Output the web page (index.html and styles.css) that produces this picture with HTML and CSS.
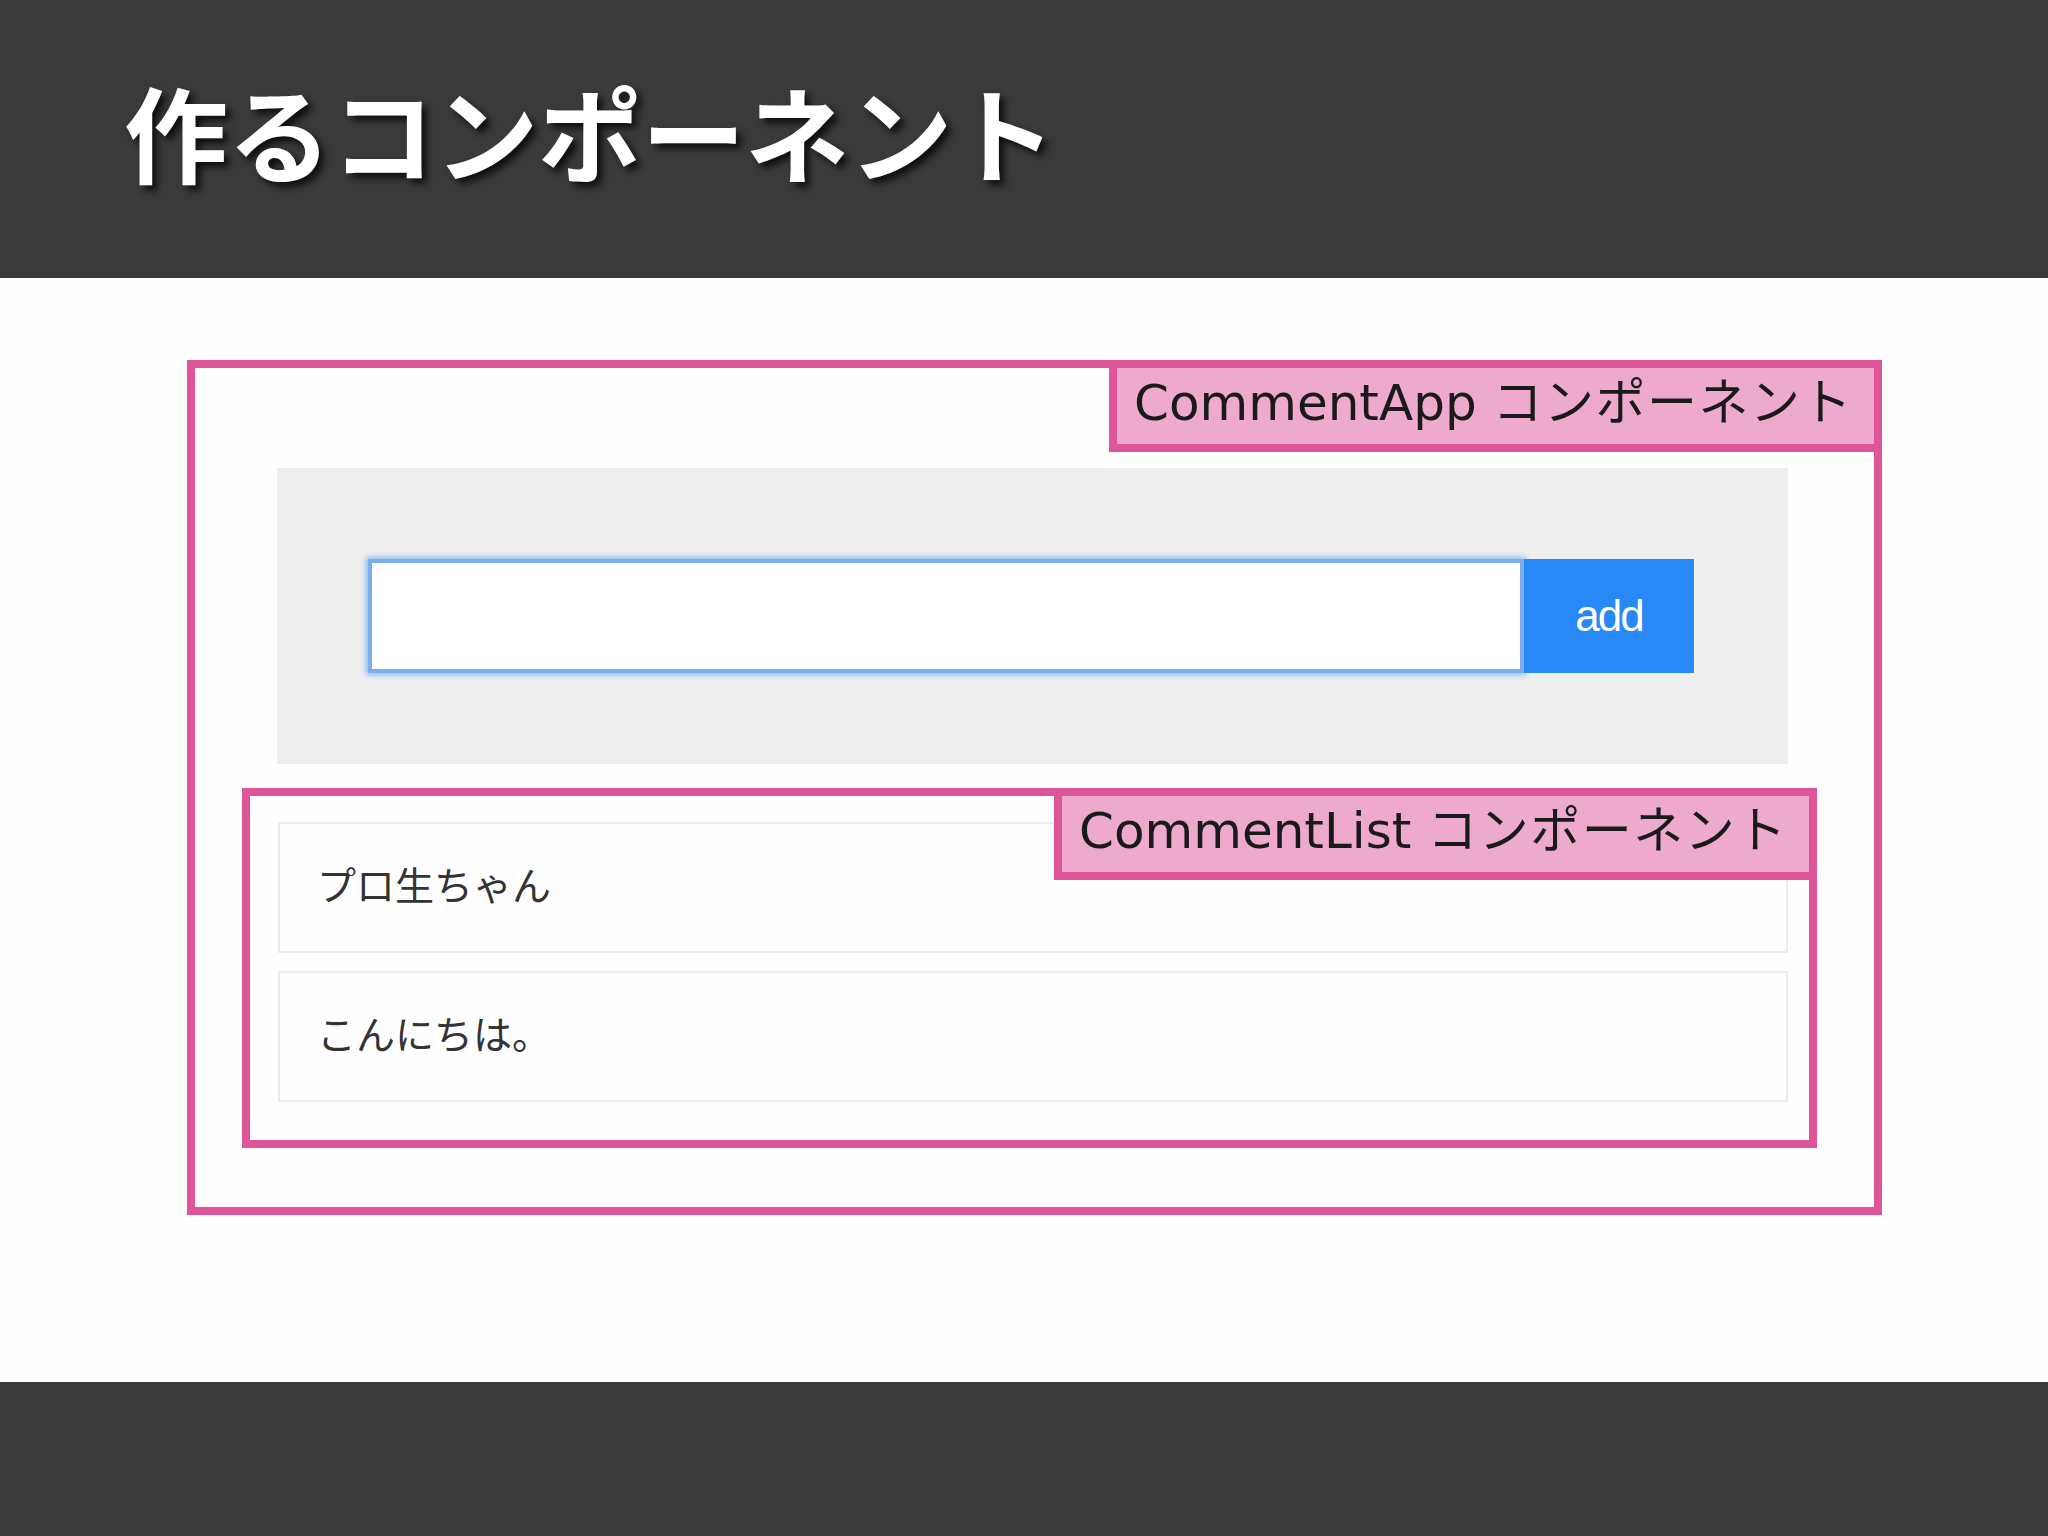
FILE: index.html
```html
<!DOCTYPE html>
<html lang="ja">
<head>
<meta charset="utf-8">
<title>作るコンポーネント</title>
<link rel="stylesheet" href="styles.css">
</head>
<body>
<header class="slide-header">
  <h1 class="slide-title">作るコンポーネント</h1>
</header>
<main class="slide-body">
  <section class="comp-app">
    <div class="comp-label">CommentApp <span class="label-ja">コンポーネント</span></div>
    <div class="form-area">
      <div class="text-input"></div>
      <div class="add-btn">add</div>
    </div>
    <section class="comp-list">
      <div class="comp-label">CommentList <span class="label-ja">コンポーネント</span></div>
      <div class="comment-item">プロ生ちゃん</div>
      <div class="comment-item">こんにちは。</div>
    </section>
  </section>
</main>
<footer class="slide-footer"></footer>
</body>
</html>
```
FILE: styles.css
```css
html, body {
  margin: 0;
  padding: 0;
}
body {
  width: 2048px;
  height: 1536px;
  background: #fefefe;
  font-family: "Noto Sans CJK JP", sans-serif;
  display: flex;
  flex-direction: column;
}
.slide-header {
  height: 278px;
  background: #3a3a3a;
  display: flex;
  align-items: center;
  padding-left: 124px;
  box-sizing: border-box;
}
.slide-title {
  margin: 0;
  color: #ffffff;
  font-family: "Noto Sans CJK JP", sans-serif;
  font-weight: 700;
  font-size: 104px;
  letter-spacing: -0.5px;
  line-height: 1;
  margin-top: -16px;
  text-shadow: 5px 5px 7px rgba(0, 0, 0, 0.75);
}
.slide-body {
  flex: 1;
  background: #fefefe;
  padding-top: 82px;
  padding-left: 187px;
  box-sizing: border-box;
}
.slide-footer {
  height: 154px;
  background: #3a3a3a;
}
.comp-app {
  position: relative;
  width: 1695px;
  height: 855px;
  border: 8px solid #df5599;
  box-sizing: border-box;
  padding-top: 100px;
  padding-left: 82px;
}
.comp-label {
  position: absolute;
  top: -8px;
  right: -8px;
  border: 8px solid #df5599;
  background: #eeaacd;
  color: #1a1a1a;
  font-family: "DejaVu Sans", "Noto Sans CJK JP", sans-serif;
  font-size: 50px;
  line-height: 70px;
  padding: 0 0 6px 17px;
  white-space: nowrap;
  box-sizing: border-box;
  height: 92px;
}
.label-ja {
  letter-spacing: 1.5px;
}
.comp-app > .comp-label {
  width: 773px;
}
.comp-list > .comp-label {
  width: 763px;
  padding-left: 17px;
}
.form-area {
  width: 1511px;
  height: 296px;
  background: #efefef;
  box-sizing: border-box;
  padding: 91px 94px 91px 91px;
  display: flex;
}
.text-input {
  width: 1156px;
  height: 114px;
  box-sizing: border-box;
  background: #ffffff;
  border: 4px solid #7aaeee;
  box-shadow: 0 0 6px 2px #8cb9f0;
}
.add-btn {
  width: 170px;
  height: 114px;
  background: #2888f5;
  color: #ffffff;
  font-family: "Liberation Sans", Arial, sans-serif;
  font-size: 44px;
  letter-spacing: -2px;
  display: flex;
  align-items: center;
  justify-content: center;
}
.comp-list {
  position: relative;
  margin-top: 24px;
  margin-left: -35px;
  width: 1575px;
  height: 360px;
  border: 8px solid #df5599;
  box-sizing: border-box;
  padding: 26px 21px 0 28px;
  display: flex;
  flex-direction: column;
  gap: 18px;
}
.comment-item {
  width: 1510px;
  height: 131px;
  box-sizing: border-box;
  border: 2px solid #ececec;
  background: #fefefe;
  padding-left: 37px;
  padding-bottom: 10px;
  display: flex;
  align-items: center;
  font-family: "Noto Sans CJK JP", sans-serif;
  font-size: 39px;
  color: #333333;
}
```
